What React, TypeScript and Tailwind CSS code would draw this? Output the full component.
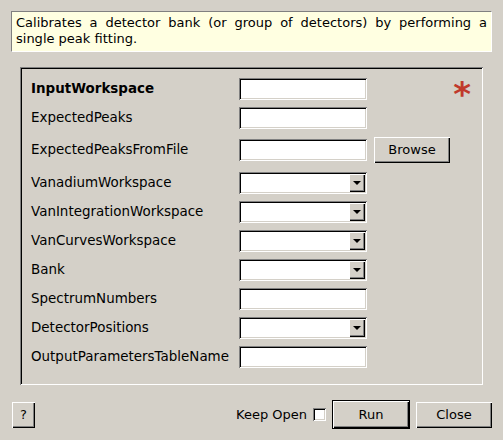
import type { ReactNode } from 'react'

const sunken =
  'shadow-[inset_1px_1px_0_#808080,inset_-1px_-1px_0_#ffffff,inset_2px_2px_0_#000000,inset_-2px_-2px_0_#d4d0c8]'
const raised =
  'shadow-[inset_1px_1px_0_#ffffff,inset_-1px_-1px_0_#000000,inset_-2px_-2px_0_#808080]'

type Kind = 'text' | 'combo' | 'file'

const rows: { label: string; kind: Kind; bold?: boolean }[] = [
  { label: 'InputWorkspace', kind: 'text', bold: true },
  { label: 'ExpectedPeaks', kind: 'text' },
  { label: 'ExpectedPeaksFromFile', kind: 'file' },
  { label: 'VanadiumWorkspace', kind: 'combo' },
  { label: 'VanIntegrationWorkspace', kind: 'combo' },
  { label: 'VanCurvesWorkspace', kind: 'combo' },
  { label: 'Bank', kind: 'combo' },
  { label: 'SpectrumNumbers', kind: 'text' },
  { label: 'DetectorPositions', kind: 'combo' },
  { label: 'OutputParametersTableName', kind: 'text' },
]

function Field({ combo }: { combo?: boolean }) {
  return (
    <div className={`relative h-[22px] w-[128px] bg-white ${sunken}`}>
      {combo && (
        <div
          className={`absolute right-[2px] top-[2px] flex h-[18px] w-[16px] items-center justify-center bg-[#d4d0c8] ${raised}`}
        >
          <div className="h-0 w-0 border-x-[4px] border-t-[4px] border-x-transparent border-t-black" />
        </div>
      )}
    </div>
  )
}

function Button({ children, className }: { children: ReactNode; className: string }) {
  return (
    <div className={`flex items-center justify-center bg-[#d4d0c8] ${raised} ${className}`}>
      {children}
    </div>
  )
}

export default function App() {
  return (
    <div className="flex h-[440px] w-[503px] flex-col bg-[#d4d0c8] pt-[11px] font-['DejaVu_Sans',sans-serif] text-[13px] text-black">
      <div className="mx-[11px] h-[41px] border border-b-white border-l-[#808080] border-r-white border-t-[#808080] bg-[#ffffe1] px-[4px] pt-[3px] text-justify leading-[16px]">
        Calibrates a detector bank (or group of detectors) by performing a single peak fitting.
      </div>

      <div className="ml-[20px] mt-[15px] flex h-[318px] w-[463px] flex-col gap-[7px] pl-[11px] pr-[11px] pt-[11px] shadow-[inset_1px_1px_0_#808080,inset_-1px_-1px_0_#ffffff,inset_2px_2px_0_#000000]">
        {rows.map(r => (
          <div
            key={r.label}
            className={`flex items-center ${r.kind === 'file' ? 'mb-[2px] mt-[1px] h-[26px]' : 'h-[22px]'}`}
          >
            <div className={`w-[208px] whitespace-nowrap text-[13.45px] ${r.bold ? 'font-bold' : ''}`}>
              {r.label}
            </div>
            <Field combo={r.kind === 'combo'} />
            {r.kind === 'file' && <Button className="ml-[7px] h-[26px] w-[76px]">Browse</Button>}
            {r.bold && (
              <div className="ml-auto mr-[1px] mt-[10px] font-bold text-[34px] leading-none text-[#c0392b]">*</div>
            )}
          </div>
        ))}
      </div>

      <div className="mt-[15px] flex items-center pl-[12px] pr-[11px]">
        <Button className="h-[26px] w-[23px]">?</Button>
        <div className="ml-auto">Keep Open</div>
        <div className={`ml-[6px] h-[13px] w-[13px] bg-white ${sunken}`} />
        <div className="ml-[6px] h-[29px] w-[78px] border border-black">
          <Button className="h-full w-full">Run</Button>
        </div>
        <Button className="ml-[6px] h-[26px] w-[76px]">Close</Button>
      </div>
    </div>
  )
}
